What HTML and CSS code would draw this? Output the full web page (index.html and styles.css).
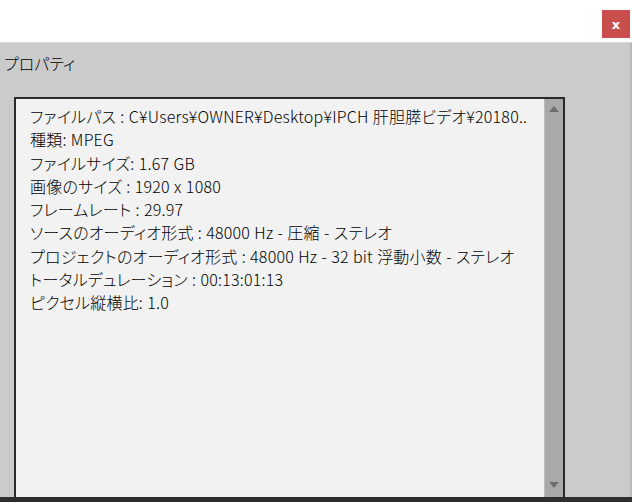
FILE: index.html
```html
<!DOCTYPE html>
<html lang="ja">
<head>
<meta charset="utf-8">
<link rel="stylesheet" href="styles.css">
</head>
<body>
<div class="window">
  <div class="titlebar">
    <div class="close">x</div>
  </div>
  <div class="panel">
    <div class="label">プロパティ</div>
    <div class="boxrow">
      <div class="box">
        <div class="content">
          <div class="line">ファイルパス : C¥Users¥OWNER¥Desktop¥IPCH 肝胆膵ビデオ¥20180..</div>
          <div class="line">種類: MPEG</div>
          <div class="line">ファイルサイズ: 1.67 GB</div>
          <div class="line">画像のサイズ : 1920 x 1080</div>
          <div class="line">フレームレート : 29.97</div>
          <div class="line">ソースのオーディオ形式 : 48000 Hz - 圧縮 - ステレオ</div>
          <div class="line">プロジェクトのオーディオ形式 : 48000 Hz - 32 bit 浮動小数 - ステレオ</div>
          <div class="line">トータルデュレーション : 00:13:01:13</div>
          <div class="line">ピクセル縦横比: 1.0</div>
        </div>
        <div class="scrollbar">
          <svg class="arrow" width="10" height="6" viewBox="0 0 10 6"><path d="M0 6 L5 0 L10 6 Z" fill="#6e6e6e"/></svg>
          <svg class="arrow" width="10" height="6" viewBox="0 0 10 6"><path d="M0 0 L5 6 L10 0 Z" fill="#6e6e6e"/></svg>
        </div>
      </div>
    </div>
  </div>
  <div class="bottombar"></div>
</div>
</body>
</html>
```
FILE: styles.css
```css
html, body {
  margin: 0;
  padding: 0;
}
body {
  width: 632px;
  height: 502px;
  overflow: hidden;
  background: #cbcbcb;
  font-family: "Noto Sans CJK JP", sans-serif;
  font-feature-settings: "palt";
  color: #000;
}
.window {
  display: flex;
  flex-direction: column;
  height: 502px;
}
.titlebar {
  height: 43px;
  background: #ffffff;
  border-bottom: 1px solid #d8d8d8;
  display: flex;
  justify-content: flex-end;
  align-items: flex-start;
  padding-right: 2px;
  box-sizing: border-box;
  flex-shrink: 0;
}
.close {
  margin-top: 10px;
  width: 28px;
  height: 28px;
  background: #c94f4f;
  color: #fff;
  font-family: "DejaVu Sans", sans-serif;
  font-weight: bold;
  font-size: 13px;
  display: flex;
  align-items: center;
  justify-content: center;
}
.panel {
  flex: 1;
  display: flex;
  flex-direction: column;
  padding-left: 14px;
  border-right: 2px solid #b9b9b9;
  min-height: 0;
}
.label {
  font-size: 16px;
  font-weight: 300;
  line-height: 20px;
  margin-top: 10px;
  margin-left: -10px;
}
.boxrow {
  margin-top: 24px;
  flex: 1;
  display: flex;
  min-height: 0;
}
.box {
  box-sizing: border-box;
  width: 551px;
  display: flex;
  background: #f2f2f2;
  border-top: 2px solid #2a2a2a;
  border-left: 2px solid #2a2a2a;
  border-right: 2px solid #2a2a2a;
}
.content {
  flex: 1;
  padding: 6px 0 0 14px;
  font-size: 16px;
  font-weight: 300;
  line-height: 23.25px;
  letter-spacing: 0.2px;
  word-spacing: 0.5px;
  white-space: nowrap;
  overflow: hidden;
}
.line {
  height: 23.25px;
}
.scrollbar {
  width: 18px;
  background: #a9a9a9;
  border-left: 1px solid #bdbdbd;
  display: flex;
  flex-direction: column;
  justify-content: space-between;
  align-items: center;
  padding: 7px 0 9px;
}
.arrow {
  display: block;
}
.bottombar {
  height: 5px;
  background: #2e2e2e;
  flex-shrink: 0;
}
```
